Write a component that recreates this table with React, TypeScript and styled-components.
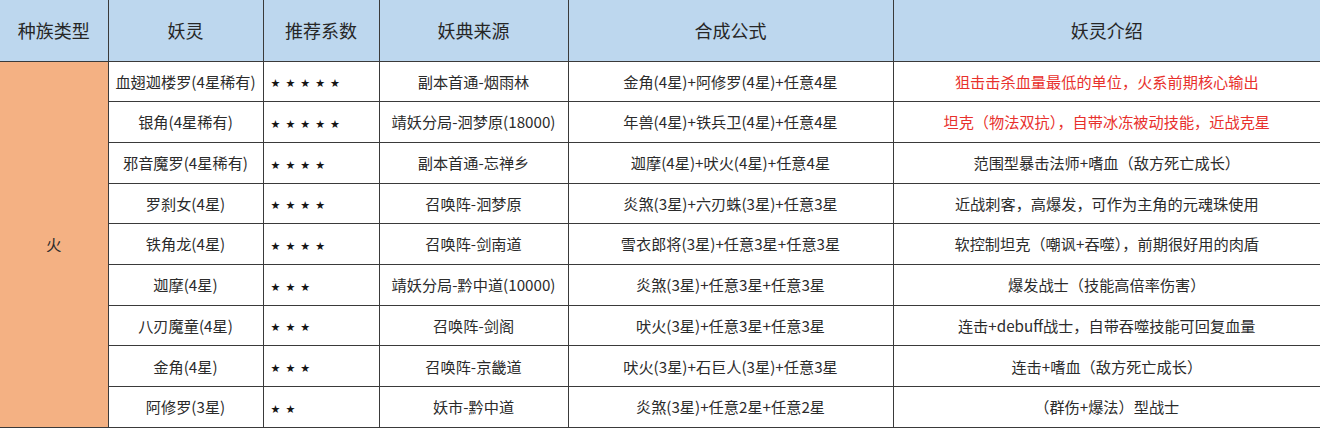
import * as React from "react";
import styled, { createGlobalStyle } from "styled-components";

const GlobalStyle = createGlobalStyle`
  html, body {
    margin: 0;
    padding: 0;
    background: #ffffff;
  }
  body {
    font-family: "Noto Sans CJK SC", "Noto Sans", sans-serif;
    color: #2b2b2b;
  }
`;

const Table = styled.table`
  width: 1320px;
  table-layout: fixed;
  border-collapse: collapse;
  border-spacing: 0;
`;

const HeadRow = styled.tr`
  height: 61px;
  background: #bdd7ee;
`;

const HeadCell = styled.th<{ $first?: boolean }>`
  font-weight: 400;
  font-size: 18px;
  color: #262626;
  text-align: center;
  padding: 0;
  border-bottom: 1px solid #3a3a3a;
  border-left: ${(p) => (p.$first ? "none" : "1px solid #3a3a3a")};
`;

const BodyRow = styled.tr`
  height: 40.7px;
`;

const Cell = styled.td<{ $align?: "left" | "center"; $red?: boolean }>`
  font-size: 15.2px;
  line-height: 1;
  padding: 0 ${(p) => (p.$align === "left" ? "7px" : "2px")};
  text-align: ${(p) => p.$align ?? "center"};
  color: ${(p) => (p.$red ? "#e8302c" : "#2b2b2b")};
  border-left: 1px solid #3a3a3a;
  border-bottom: 1px solid #3a3a3a;
  white-space: nowrap;
  overflow: hidden;
`;

const RaceCell = styled.td`
  background: #f4b183;
  font-size: 15.5px;
  text-align: center;
  vertical-align: middle;
  color: #2b2b2b;
  border-bottom: 1px solid #3a3a3a;
  padding: 0;
`;

const Stars = styled.span`
  display: inline-flex;
  gap: 5px;
  font-size: 11px;
  color: #151515;
  font-family: "DejaVu Sans", sans-serif;
`;

type Row = {
  name: string;
  stars: number;
  source: string;
  formula: string;
  intro: string;
  red?: boolean;
};

const rows: Row[] = [
  { name: "血翅迦楼罗(4星稀有)", stars: 5, source: "副本首通-烟雨林", formula: "金角(4星)+阿修罗(4星)+任意4星", intro: "狙击击杀血量最低的单位，火系前期核心输出", red: true },
  { name: "银角(4星稀有)", stars: 5, source: "靖妖分局-洄梦原(18000)", formula: "年兽(4星)+铁兵卫(4星)+任意4星", intro: "坦克（物法双抗），自带冰冻被动技能，近战克星", red: true },
  { name: "邪音魔罗(4星稀有)", stars: 4, source: "副本首通-忘禅乡", formula: "迦摩(4星)+吠火(4星)+任意4星", intro: "范围型暴击法师+嗜血（敌方死亡成长）" },
  { name: "罗刹女(4星)", stars: 4, source: "召唤阵-洄梦原", formula: "炎煞(3星)+六刃蛛(3星)+任意3星", intro: "近战刺客，高爆发，可作为主角的元魂珠使用" },
  { name: "铁角龙(4星)", stars: 4, source: "召唤阵-剑南道", formula: "雪衣郎将(3星)+任意3星+任意3星", intro: "软控制坦克（嘲讽+吞噬），前期很好用的肉盾" },
  { name: "迦摩(4星)", stars: 3, source: "靖妖分局-黔中道(10000)", formula: "炎煞(3星)+任意3星+任意3星", intro: "爆发战士（技能高倍率伤害）" },
  { name: "八刃魔童(4星)", stars: 3, source: "召唤阵-剑阁", formula: "吠火(3星)+任意3星+任意3星", intro: "连击+debuff战士，自带吞噬技能可回复血量" },
  { name: "金角(4星)", stars: 3, source: "召唤阵-京畿道", formula: "吠火(3星)+石巨人(3星)+任意3星", intro: "连击+嗜血（敌方死亡成长）" },
  { name: "阿修罗(3星)", stars: 2, source: "妖市-黔中道", formula: "炎煞(3星)+任意2星+任意2星", intro: "（群伤+爆法）型战士" },
];

const headers = ["种族类型", "妖灵", "推荐系数", "妖典来源", "合成公式", "妖灵介绍"];
const widths = [108, 155, 116, 189, 325, 427];

export default function App() {
  return (
    <>
      <GlobalStyle />
      <Table>
        <colgroup>
          {widths.map((w, i) => (
            <col key={i} style={{ width: w }} />
          ))}
        </colgroup>
        <thead>
          <HeadRow>
            {headers.map((h, i) => (
              <HeadCell key={h} $first={i === 0}>
                {h}
              </HeadCell>
            ))}
          </HeadRow>
        </thead>
        <tbody>
          {rows.map((r, i) => (
            <BodyRow key={r.name}>
              {i === 0 && <RaceCell rowSpan={rows.length}>火</RaceCell>}
              <Cell>{r.name}</Cell>
              <Cell $align="left">
                <Stars>
                  {Array.from({ length: r.stars }).map((_, k) => (
                    <span key={k}>★</span>
                  ))}
                </Stars>
              </Cell>
              <Cell>{r.source}</Cell>
              <Cell>{r.formula}</Cell>
              <Cell $red={r.red}>{r.intro}</Cell>
            </BodyRow>
          ))}
        </tbody>
      </Table>
    </>
  );
}
